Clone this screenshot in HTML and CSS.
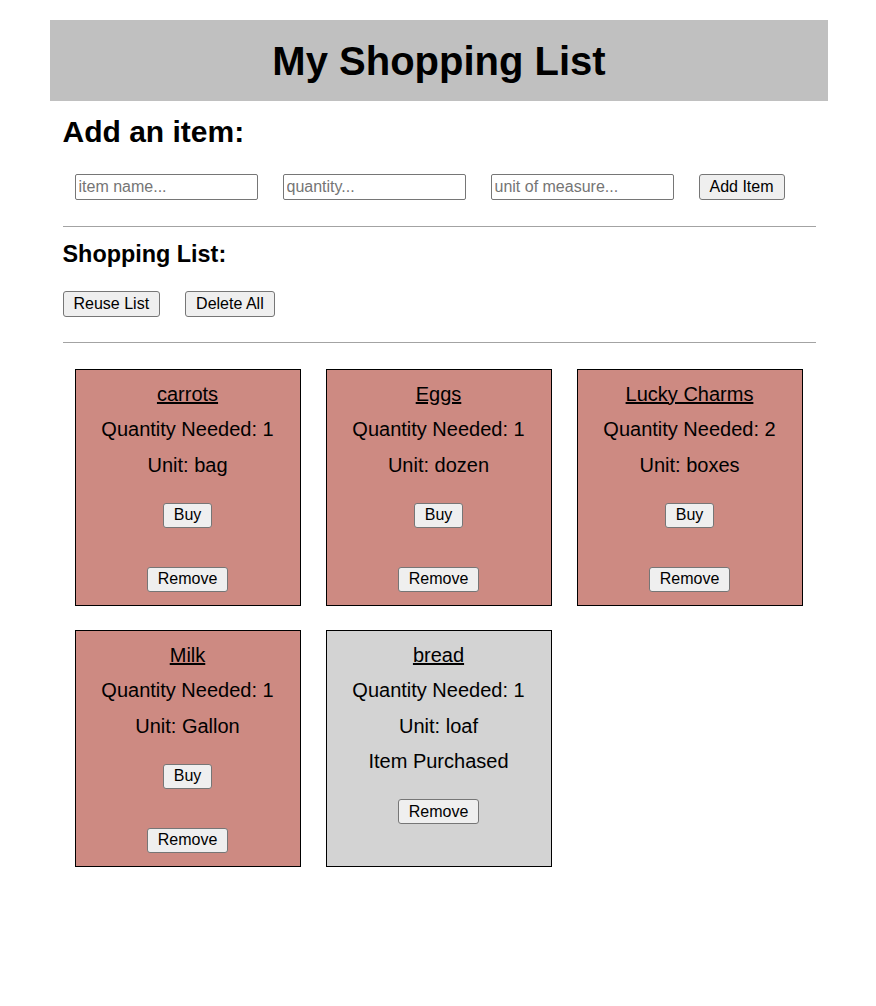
FILE: index.html
```html
<!DOCTYPE html>
<html lang="en">
<head>
<meta charset="utf-8">
<title>My Shopping List</title>
<link rel="stylesheet" href="styles.css">
</head>
<body>
<div class="page">
  <header class="banner">
    <h1 class="banner-title">My Shopping List</h1>
  </header>
  <main class="content">
    <h2 class="section-title">Add an item:</h2>
    <form class="add-form">
      <input class="field" type="text" placeholder="item name...">
      <input class="field" type="text" placeholder="quantity...">
      <input class="field" type="text" placeholder="unit of measure...">
      <button class="btn" type="button">Add Item</button>
    </form>
    <hr class="rule rule-first">
    <h3 class="list-title">Shopping List:</h3>
    <div class="list-actions">
      <button class="btn" type="button">Reuse List</button>
      <button class="btn" type="button">Delete All</button>
    </div>
    <hr class="rule rule-second">
    <div class="cards">
      <div class="card card-needed">
        <p class="card-name">carrots</p>
        <p class="card-line">Quantity Needed: 1</p>
        <p class="card-line">Unit: bag</p>
        <div class="card-actions">
          <button class="btn btn-card" type="button">Buy</button>
          <button class="btn btn-card btn-remove" type="button">Remove</button>
        </div>
      </div>
      <div class="card card-needed">
        <p class="card-name">Eggs</p>
        <p class="card-line">Quantity Needed: 1</p>
        <p class="card-line">Unit: dozen</p>
        <div class="card-actions">
          <button class="btn btn-card" type="button">Buy</button>
          <button class="btn btn-card btn-remove" type="button">Remove</button>
        </div>
      </div>
      <div class="card card-needed">
        <p class="card-name">Lucky Charms</p>
        <p class="card-line">Quantity Needed: 2</p>
        <p class="card-line">Unit: boxes</p>
        <div class="card-actions">
          <button class="btn btn-card" type="button">Buy</button>
          <button class="btn btn-card btn-remove" type="button">Remove</button>
        </div>
      </div>
      <div class="card card-needed">
        <p class="card-name">Milk</p>
        <p class="card-line">Quantity Needed: 1</p>
        <p class="card-line">Unit: Gallon</p>
        <div class="card-actions">
          <button class="btn btn-card" type="button">Buy</button>
          <button class="btn btn-card btn-remove" type="button">Remove</button>
        </div>
      </div>
      <div class="card card-bought">
        <p class="card-name">bread</p>
        <p class="card-line">Quantity Needed: 1</p>
        <p class="card-line">Unit: loaf</p>
        <p class="card-line">Item Purchased</p>
        <div class="card-actions">
          <button class="btn btn-card" type="button">Remove</button>
        </div>
      </div>
    </div>
  </main>
</div>
</body>
</html>
```
FILE: styles.css
```css
* {
  box-sizing: border-box;
}

html, body {
  margin: 0;
  padding: 0;
  background: #ffffff;
}

body {
  font-family: "Liberation Sans", Arial, Helvetica, sans-serif;
  color: #000000;
}

.page {
  width: 778px;
  margin: 20px 0 0 50px;
}

.banner {
  background: #c0c0c0;
  height: 81px;
  display: flex;
  align-items: center;
  justify-content: center;
}

.banner-title {
  margin: 0;
  font-size: 40px;
  line-height: 46px;
  font-weight: bold;
  padding-top: 1px;
}

.content {
  padding: 0 12.5px;
}

.section-title {
  margin: 14px 0 0;
  font-size: 30px;
  line-height: 34px;
  font-weight: bold;
}

.add-form {
  display: flex;
  gap: 25px;
  margin: 25px 0 0;
  padding-left: 12px;
}

.field {
  width: 183px;
  height: 26px;
  margin: 0;
  padding: 2px 3px;
  border: 1px solid #767676;
  border-radius: 2px;
  font-family: "Liberation Sans", Arial, sans-serif;
  font-size: 16px;
  line-height: 18px;
  color: #000;
  background: #fff;
}

.field::placeholder {
  color: #757575;
}

.btn {
  height: 26px;
  margin: 0;
  padding: 0 10px;
  border: 1px solid #767676;
  border-radius: 3px;
  background: #efefef;
  font-family: "Liberation Sans", Arial, sans-serif;
  font-size: 16px;
  line-height: 18px;
  color: #000;
}

.rule {
  height: 0;
  margin: 0;
  border: 0;
  border-top: 1px solid #a3a3a3;
}

.rule-first {
  margin-top: 26px;
}

.list-title {
  margin: 13.5px 0 0;
  font-size: 23.4px;
  line-height: 27px;
  font-weight: bold;
}

.list-actions {
  display: flex;
  gap: 25px;
  margin-top: 23.5px;
}

.rule-second {
  margin-top: 25px;
}

.cards {
  display: grid;
  grid-template-columns: repeat(3, 226px);
  column-gap: 25px;
  row-gap: 24px;
  padding: 26px 12px 0;
}

.card {
  height: 237px;
  border: 1px solid #000;
  text-align: center;
  display: flow-root;
}

.card-needed {
  background: #cd8a82;
}

.card-bought {
  background: #d3d3d3;
}

.card-name,
.card-line {
  margin: 12.5px 0;
  font-size: 20px;
  line-height: 23px;
}

.card-name {
  text-decoration: underline;
}

.card-actions {
  margin-top: 26px;
  display: flex;
  flex-direction: column;
  align-items: center;
  gap: 39px;
}

.btn-card {
  height: 25px;
}
```
